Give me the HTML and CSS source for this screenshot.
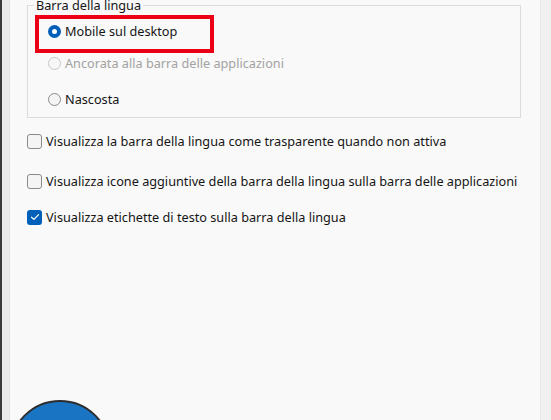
FILE: index.html
```html
<!DOCTYPE html>
<html lang="it">

<head>
    <meta charset="UTF-8">
    <meta name="viewport" content="width=device-width, initial-scale=1.0">
    <title>Barra della lingua</title>
    <link rel="stylesheet" href="styles.css">
</head>

<body>
    <div class="window">
        <div class="side-left"></div>
        <div class="panel">
            <fieldset class="group">
                <legend>Barra della lingua</legend>
                <div class="highlight">
                    <label class="option">
                        <span class="radio checked"></span>
                        <span>Mobile sul desktop</span>
                    </label>
                </div>
                <label class="option disabled second">
                    <span class="radio"></span>
                    <span>Ancorata alla barra delle applicazioni</span>
                </label>
                <label class="option third">
                    <span class="radio"></span>
                    <span>Nascosta</span>
                </label>
            </fieldset>

            <label class="check first">
                <span class="box"></span>
                <span>Visualizza la barra della lingua come trasparente quando non attiva</span>
            </label>
            <label class="check second">
                <span class="box"></span>
                <span>Visualizza icone aggiuntive della barra della lingua sulla barra delle applicazioni</span>
            </label>
            <label class="check third">
                <span class="box checked">
                    <svg width="10" height="8" viewBox="0 0 10 8">
                        <path d="M1.5 4.2 L3.9 6.4 L8.6 1.6" fill="none" stroke="#fff" stroke-width="1.2" stroke-linecap="round" stroke-linejoin="round" />
                    </svg>
                </span>
                <span>Visualizza etichette di testo sulla barra della lingua</span>
            </label>

            <div class="help-button"></div>
        </div>
        <div class="side-right"></div>
    </div>
</body>

</html>
```

FILE: styles.css
```css
body {
    margin: 0;
    font-family: "Noto Sans", "Open Sans", sans-serif;
    font-size: 12.7px;
    color: #151515;
    background-color: #f9f9f9;
}

.window {
    display: flex;
    height: 420px;
    overflow: hidden;
}

.side-left {
    width: 9px;
    flex-shrink: 0;
    background: linear-gradient(to right, #3b3b3b 0, #3b3b3b 2px, #ebebeb 2px);
    border-right: 1px solid #e3e3e3;
}

.panel {
    flex: 1;
    display: flex;
    flex-direction: column;
    align-items: flex-start;
    padding-left: 17px;
    background-color: #f9f9f9;
    overflow: hidden;
}

.panel > * {
    flex-shrink: 0;
}

.side-right {
    width: 10px;
    flex-shrink: 0;
    background-color: #f0f0f0;
    border-left: 1px solid #e8e8e8;
}

/* group box */
.group {
    box-sizing: border-box;
    width: 494px;
    height: 118px;
    margin: 0;
    padding: 0;
    border: 1px solid #dcdcdc;
    display: flex;
    flex-direction: column;
    align-items: flex-start;
}

.group > * {
    flex-shrink: 0;
}

.group legend {
    margin-left: 6px;
    padding: 0 2px;
    line-height: 11px;
}

.highlight {
    box-sizing: border-box;
    width: 179px;
    height: 38px;
    margin: 4px 0 0 7px;
    padding: 2px 0 0 9px;
    border: 4px solid #ec0016;
}

.option {
    display: flex;
    align-items: center;
    gap: 4px;
    height: 20px;
    white-space: nowrap;
}

.option.second,
.option.third {
    padding-left: 20px;
}

.option.third {
    margin-top: 16px;
}

.option.disabled {
    color: #a2a2a2;
}

.radio {
    box-sizing: border-box;
    width: 13px;
    height: 13px;
    border-radius: 50%;
    border: 1px solid #8a8a8a;
    background-color: #f4f4f4;
}

.option.disabled .radio {
    border-color: #c8c8c8;
    background-color: #f7f7f7;
}

.radio.checked {
    border: 4px solid #005fb8;
    background-color: #fff;
}

/* checkboxes */
.check {
    display: flex;
    align-items: center;
    gap: 4px;
    height: 20px;
    white-space: nowrap;
}

.check.first {
    margin-top: 13px;
}

.check.second {
    margin-top: 20px;
}

.check.third {
    margin-top: 16px;
}

.box {
    box-sizing: border-box;
    width: 15px;
    height: 15px;
    border-radius: 3px;
    border: 1px solid #8a8a8a;
    background-color: #f4f4f4;
    display: flex;
    align-items: center;
    justify-content: center;
}

.box.checked {
    border: none;
    background-color: #005fb8;
}

.help-button {
    width: 98px;
    height: 98px;
    margin-top: 173px;
    margin-left: -18px;
    border-radius: 50%;
    border: 2px solid #2d2d2d;
    background-color: #1a74c4;
}
```
